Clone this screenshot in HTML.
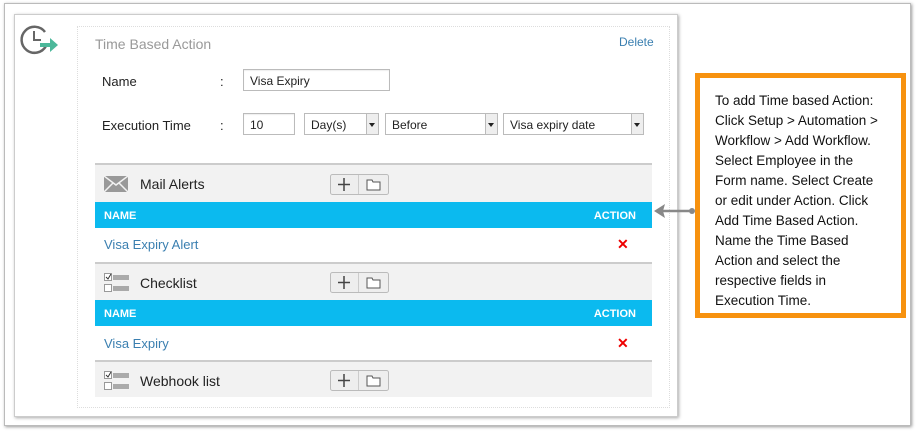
<!DOCTYPE html>
<html><head><style>
*{margin:0;padding:0;box-sizing:border-box}
body{width:916px;height:431px;background:#fff;font-family:"Liberation Sans",Arial,sans-serif;position:relative;overflow:hidden;font-size:12px;color:#222}
.abs{position:absolute}
.frame{left:4px;top:3px;width:907px;height:423px;border:1px solid #bbb;box-shadow:1px 1px 3px #999}
.card{left:14px;top:14px;width:664px;height:403px;border:1px solid #ccc;box-shadow:1px 1px 3px #aaa;background:#fff}
.panel{left:77px;top:26px;width:593px;height:382px;border:1px dotted #ddd}
.inp{border:1px solid #bbb;background:#fff;height:22px;font-size:12px;padding:4px 6px;box-shadow:inset 0 1px 1px #eee}
.sel{border:1px solid #bbb;background:#fff;height:22px;font-size:12px;padding:4px 6px}
.sel:after{content:"";position:absolute;right:0;top:0;width:11px;height:20px;background:#eee;border-left:1px solid #bbb}
.arr{position:absolute;right:3px;top:9px;width:0;height:0;border-left:3px solid transparent;border-right:3px solid transparent;border-top:4px solid #222;z-index:2}
.sec{left:95px;width:557px;background:#f2f2f2;border-top:2px solid #ccc;font-size:14px}
.blue{left:95px;width:557px;height:26px;background:#0bbaef;color:#fff;font-weight:bold;font-size:11px}
.row{left:95px;width:557px;color:#3a7fb0;font-size:13px}
.x{color:#e00;font-weight:bold;font-size:14px}
</style></head><body>
<div class="abs frame"></div>
<div class="abs card"></div>
<div class="abs panel"></div>
<svg class="abs" style="left:19px;top:24px" width="42" height="32" viewBox="0 0 42 32">
<path d="M27 22 A13 13 0 1 1 26 8" fill="none" stroke="#666" stroke-width="2.5"/>
<path d="M15 7 V16 H22" fill="none" stroke="#666" stroke-width="2"/>
<path d="M21 19 H31 V14 L39 21 L31 28 V23 H21 Z" fill="#4cb89a"/>
</svg>
<div class="abs" style="left:95px;top:36px;font-size:14px;color:#999">Time Based Action</div>
<div class="abs" style="left:619px;top:35px;color:#3a7fb0">Delete</div>
<div class="abs" style="left:102px;top:74px;font-size:13px">Name</div>
<div class="abs" style="left:220px;top:74px;font-size:13px">:</div>
<div class="abs inp" style="left:243px;top:69px;width:147px">Visa Expiry</div>
<div class="abs" style="left:102px;top:118px;font-size:13px">Execution Time</div>
<div class="abs" style="left:220px;top:118px;font-size:13px">:</div>
<div class="abs inp" style="left:243px;top:113px;width:52px">10</div>
<div class="abs sel" style="left:304px;top:113px;width:75px">Day(s)<i class="arr"></i></div>
<div class="abs sel" style="left:385px;top:113px;width:113px">Before<i class="arr"></i></div>
<div class="abs sel" style="left:503px;top:113px;width:141px">Visa expiry date<i class="arr"></i></div>

<div class="abs sec" style="top:163px;height:39px"></div>
<svg class="abs" style="left:104px;top:176px" width="24" height="16"><rect width="24" height="16" fill="#999"/><path d="M0 0 L12 9 L24 0 M0 16 L9 7 M24 16 L15 7" stroke="#f2f2f2" stroke-width="1.5" fill="none"/></svg>
<div class="abs" style="left:140px;top:176px;font-size:14px">Mail Alerts</div>
<div class="abs blue" style="top:202px"><span class="abs" style="left:9px;top:8px">NAME</span><span class="abs" style="right:16px;top:8px">ACTION</span></div>
<div class="abs row" style="top:237px;left:104px">Visa Expiry Alert</div>
<div class="abs x" style="left:617px;top:236px">✕</div>

<div class="abs sec" style="top:262px;height:38px"></div>
<div class="abs" style="left:140px;top:275px;font-size:14px">Checklist</div>
<div class="abs blue" style="top:300px"><span class="abs" style="left:9px;top:8px">NAME</span><span class="abs" style="right:16px;top:8px">ACTION</span></div>
<div class="abs row" style="top:336px;left:104px">Visa Expiry</div>
<div class="abs x" style="left:617px;top:335px">✕</div>

<div class="abs sec" style="top:360px;height:37px"></div>
<div class="abs" style="left:140px;top:373px;font-size:14px">Webhook list</div>

<svg class="abs" style="left:104px;top:273px" width="26" height="20"><rect x="0.5" y="0.5" width="7" height="7" fill="#fff" stroke="#999"/><path d="M2 4 L4 6 L7 1" stroke="#333" fill="none"/><rect x="9" y="2" width="16" height="5" fill="#aaa"/><rect x="0.5" y="11.5" width="7" height="7" fill="#fff" stroke="#999"/><rect x="9" y="13" width="16" height="5" fill="#aaa"/></svg>
<svg class="abs" style="left:104px;top:371px" width="26" height="20"><rect x="0.5" y="0.5" width="7" height="7" fill="#fff" stroke="#999"/><path d="M2 4 L4 6 L7 1" stroke="#333" fill="none"/><rect x="9" y="2" width="16" height="5" fill="#aaa"/><rect x="0.5" y="11.5" width="7" height="7" fill="#fff" stroke="#999"/><rect x="9" y="13" width="16" height="5" fill="#aaa"/></svg>

<svg class="abs" style="left:330px;top:174px" width="60" height="22"><rect x=".5" y=".5" width="58" height="20" rx="2" fill="#eee" stroke="#bbb"/><line x1="28.5" y1="1" x2="28.5" y2="20" stroke="#ccc"/><path d="M14 4 V17 M8 10.5 H20" stroke="#444" stroke-width="1.5"/><path d="M37 6 H42 L43 8 H50 V16 H37 Z" fill="#fff" stroke="#555"/></svg>
<svg class="abs" style="left:330px;top:272px" width="60" height="22"><rect x=".5" y=".5" width="58" height="20" rx="2" fill="#eee" stroke="#bbb"/><line x1="28.5" y1="1" x2="28.5" y2="20" stroke="#ccc"/><path d="M14 4 V17 M8 10.5 H20" stroke="#444" stroke-width="1.5"/><path d="M37 6 H42 L43 8 H50 V16 H37 Z" fill="#fff" stroke="#555"/></svg>
<svg class="abs" style="left:330px;top:370px" width="60" height="22"><rect x=".5" y=".5" width="58" height="20" rx="2" fill="#eee" stroke="#bbb"/><line x1="28.5" y1="1" x2="28.5" y2="20" stroke="#ccc"/><path d="M14 4 V17 M8 10.5 H20" stroke="#444" stroke-width="1.5"/><path d="M37 6 H42 L43 8 H50 V16 H37 Z" fill="#fff" stroke="#555"/></svg>

<svg class="abs" style="left:652px;top:203px" width="46" height="16"><path d="M8 8 H40" stroke="#888" stroke-width="2.5"/><path d="M2 8 L13 1 L11 8 L13 15 Z" fill="#888"/><circle cx="40" cy="8" r="3" fill="#888"/></svg>
<div class="abs" style="left:695px;top:73px;width:211px;height:245px;border:5px solid #f7920f;padding:13px 0 0 15px;font-size:13.5px;line-height:20px;color:#111;white-space:nowrap">To add Time based Action:<br>Click Setup &gt; Automation &gt;<br>Workflow &gt; Add Workflow.<br>Select Employee in the<br>Form name. Select Create<br>or edit under Action. Click<br>Add Time Based Action.<br>Name the Time Based<br>Action and select the<br>respective fields in<br>Execution Time.</div>
</body></html>
